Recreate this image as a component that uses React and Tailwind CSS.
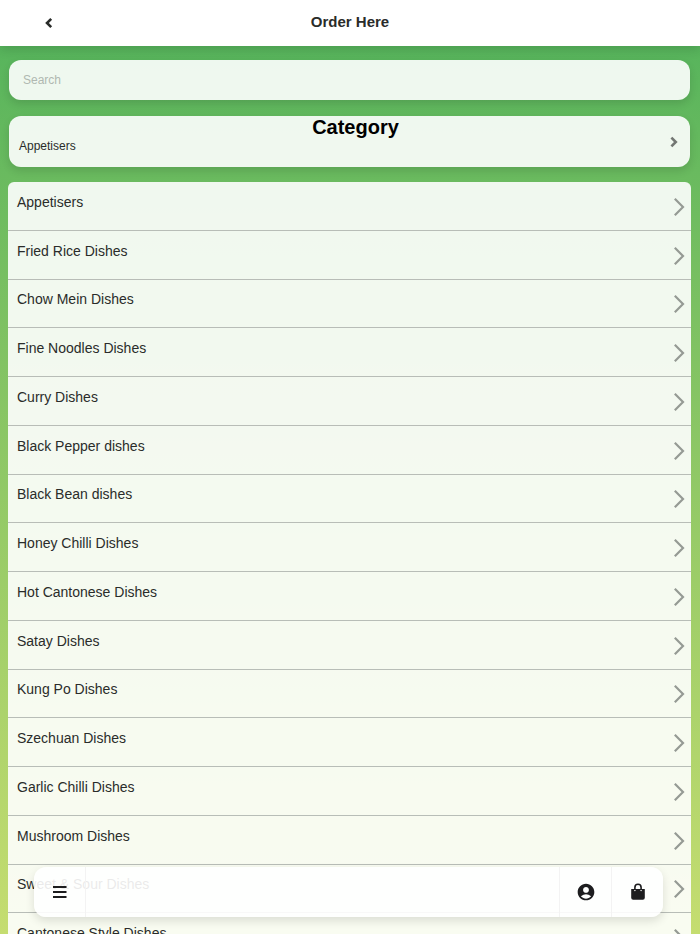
import { MdAccountCircle } from "react-icons/md";

const CATEGORIES = [
	"Appetisers",
	"Fried Rice Dishes",
	"Chow Mein Dishes",
	"Fine Noodles Dishes",
	"Curry Dishes",
	"Black Pepper dishes",
	"Black Bean dishes",
	"Honey Chilli Dishes",
	"Hot Cantonese Dishes",
	"Satay Dishes",
	"Kung Po Dishes",
	"Szechuan Dishes",
	"Garlic Chilli Dishes",
	"Mushroom Dishes",
	"Sweet & Sour Dishes",
	"Cantonese Style Dishes",
];

const Chevron = ({ d, strokeWidth, className }) => (
	<svg
		viewBox="0 0 20 20"
		className={className}
		fill="none"
		stroke="currentColor"
		strokeWidth={strokeWidth}
		aria-hidden="true"
	>
		<path d={d} />
	</svg>
);

const BagIcon = () => (
	<svg viewBox="0 0 20 20" className="size-5" aria-hidden="true">
		<path
			d="M6.9 8V5.4a3.1 3.1 0 0 1 6.2 0V8"
			fill="none"
			stroke="currentColor"
			strokeWidth="1.6"
		/>
		<path
			fill="currentColor"
			fillRule="evenodd"
			d="M3.2 7h13.6v8.8a2 2 0 0 1-2 2H5.2a2 2 0 0 1-2-2zM6.9 7.8a.7.7 0 1 0 0 1.4.7.7 0 0 0 0-1.4zm6.2 0a.7.7 0 1 0 0 1.4.7.7 0 0 0 0-1.4z"
		/>
	</svg>
);

const Header = () => (
	<header className="relative z-10 grid h-[46px] shrink-0 grid-cols-[98px_1fr_98px] bg-white pb-[2px] shadow-[0_4px_10px_rgba(0,0,0,0.12)]">
		<button type="button" aria-label="Back" className="flex items-center justify-center pt-[2px]">
			<Chevron d="M12.2 5.8 8 10l4.2 4.2" strokeWidth="2.6" className="size-5" />
		</button>
		<h1 className="self-center text-center text-[15px] font-bold">Order Here</h1>
	</header>
);

const CategoryPicker = () => (
	<section className="mt-4 h-[51px] rounded-xl bg-white/90 px-[10px] shadow-[0_4px_8px_rgba(0,0,0,0.12)]">
		<h2 className="pl-3 text-center text-xl leading-[22px] font-bold text-black">Category</h2>
		<button type="button" className="flex w-full items-start justify-between text-left text-xs leading-4">
			<span>Appetisers</span>
			<Chevron d="M7.4 5.6 11.8 10l-4.4 4.4" strokeWidth="2.6" className="-mt-[6px] -mr-1 size-5 text-[#737773]" />
		</button>
	</section>
);

const CategoryList = () => (
	<ul className="-mx-px mt-[15px] grid min-h-[780px] auto-rows-fr rounded-t-md bg-white/90">
		{CATEGORIES.map((name) => (
			<li key={name} className="border-b border-[#b8bdb7]">
				<button type="button" className="flex h-full w-full items-center justify-between pt-[2px] pr-[2px] pl-[9px] text-left text-sm">
					<span className="pb-[10px]">{name}</span>
					<Chevron d="M5.8 1.8 14 10l-8.2 8.2" strokeWidth="2.2" className="size-5 text-[#959a94]" />
				</button>
			</li>
		))}
	</ul>
);

const BottomBar = () => (
	<nav className="absolute right-[37px] bottom-[17px] left-[34px] z-10 flex h-[50px] rounded-xl bg-white/90 text-[#1d1d1f] shadow-[0_4px_10px_rgba(0,0,0,0.12)]">
		<button type="button" aria-label="Menu" className="flex w-[52px] items-center justify-center border-r border-[#f3f3f3]">
			<svg viewBox="0 0 20 20" className="size-5" fill="currentColor" aria-hidden="true">
				<path d="M3 4h13.5v2H3zM3 9h13.500v2H3zM3 14h13.5v2H3z" />
			</svg>
		</button>
		<div className="flex-1" />
		<button type="button" aria-label="Account" className="flex w-[52px] items-center justify-center border-l border-[#f3f3f3]">
			<MdAccountCircle className="size-5" />
		</button>
		<button type="button" aria-label="Basket" className="flex w-[52px] items-center justify-center border-l border-[#f3f3f3]">
			<BagIcon />
		</button>
	</nav>
);

export default function App() {
	return (
		<div className="relative flex h-screen flex-col overflow-hidden bg-linear-to-b from-[#50b25b] to-[#c5dd70] font-['Liberation_Sans',Arial,sans-serif] text-[#2a2c2a]">
			<Header />
			<main className="min-h-0 flex-1 overflow-y-auto pt-[14px] pr-[10px] pl-[9px] [scrollbar-width:none]">
				<input
					type="search"
					aria-label="Search"
					placeholder="Search"
					className="block h-10 w-full rounded-xl bg-white/90 px-[14px] text-xs shadow-[0_4px_8px_rgba(0,0,0,0.12)] outline-none placeholder:text-[#b0b8b1]"
				/>
				<CategoryPicker />
				<CategoryList />
			</main>
			<BottomBar />
		</div>
	);
}
